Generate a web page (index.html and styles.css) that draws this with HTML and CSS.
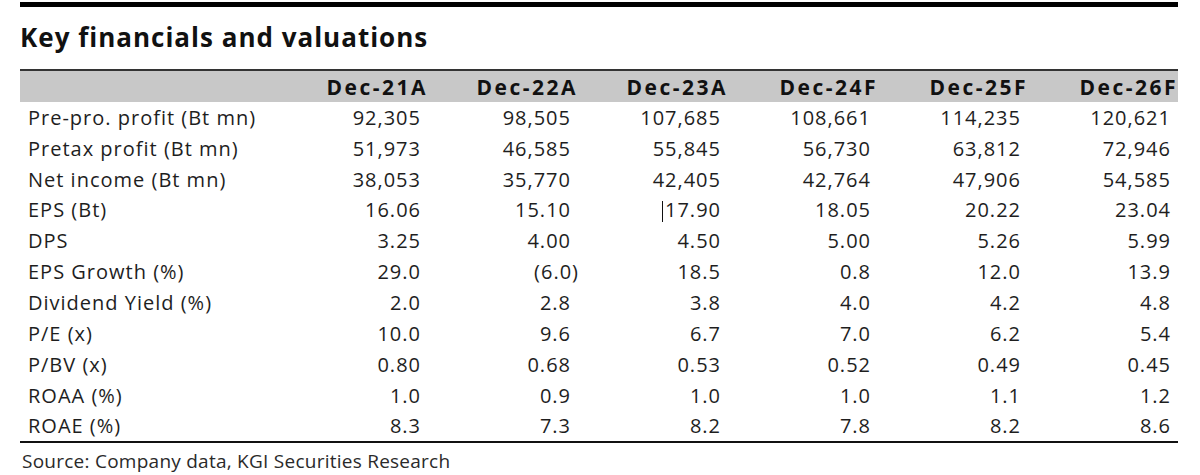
FILE: index.html
```html
<!DOCTYPE html>
<html lang="en">
<head>
<meta charset="utf-8">
<title>Key financials and valuations</title>
<link rel="stylesheet" href="styles.css">
</head>
<body>
<div class="page">
  <div class="topbar"></div>
  <h1 class="title">Key financials and valuations</h1>
  <div class="rule-top"></div>
  <div class="table">
    <div class="row head">
      <div class="label"></div>
      <div class="cell">Dec-21A</div>
      <div class="cell">Dec-22A</div>
      <div class="cell">Dec-23A</div>
      <div class="cell">Dec-24F</div>
      <div class="cell">Dec-25F</div>
      <div class="cell">Dec-26F</div>
    </div>
    <div class="row">
      <div class="label">Pre-pro. profit (Bt mn)</div>
      <div class="cell">92,305</div><div class="cell">98,505</div><div class="cell">107,685</div><div class="cell">108,661</div><div class="cell">114,235</div><div class="cell">120,621</div>
    </div>
    <div class="row">
      <div class="label">Pretax profit (Bt mn)</div>
      <div class="cell">51,973</div><div class="cell">46,585</div><div class="cell">55,845</div><div class="cell">56,730</div><div class="cell">63,812</div><div class="cell">72,946</div>
    </div>
    <div class="row">
      <div class="label">Net income (Bt mn)</div>
      <div class="cell">38,053</div><div class="cell">35,770</div><div class="cell">42,405</div><div class="cell">42,764</div><div class="cell">47,906</div><div class="cell">54,585</div>
    </div>
    <div class="row">
      <div class="label">EPS (Bt)</div>
      <div class="cell">16.06</div><div class="cell">15.10</div><div class="cell"><span class="caret"></span>17.90</div><div class="cell">18.05</div><div class="cell">20.22</div><div class="cell">23.04</div>
    </div>
    <div class="row">
      <div class="label">DPS</div>
      <div class="cell">3.25</div><div class="cell">4.00</div><div class="cell">4.50</div><div class="cell">5.00</div><div class="cell">5.26</div><div class="cell">5.99</div>
    </div>
    <div class="row">
      <div class="label">EPS Growth (%)</div>
      <div class="cell">29.0</div><div class="cell neg">(6.0)</div><div class="cell">18.5</div><div class="cell">0.8</div><div class="cell">12.0</div><div class="cell">13.9</div>
    </div>
    <div class="row">
      <div class="label">Dividend Yield (%)</div>
      <div class="cell">2.0</div><div class="cell">2.8</div><div class="cell">3.8</div><div class="cell">4.0</div><div class="cell">4.2</div><div class="cell">4.8</div>
    </div>
    <div class="row">
      <div class="label">P/E (x)</div>
      <div class="cell">10.0</div><div class="cell">9.6</div><div class="cell">6.7</div><div class="cell">7.0</div><div class="cell">6.2</div><div class="cell">5.4</div>
    </div>
    <div class="row">
      <div class="label">P/BV (x)</div>
      <div class="cell">0.80</div><div class="cell">0.68</div><div class="cell">0.53</div><div class="cell">0.52</div><div class="cell">0.49</div><div class="cell">0.45</div>
    </div>
    <div class="row">
      <div class="label">ROAA (%)</div>
      <div class="cell">1.0</div><div class="cell">0.9</div><div class="cell">1.0</div><div class="cell">1.0</div><div class="cell">1.1</div><div class="cell">1.2</div>
    </div>
    <div class="row">
      <div class="label">ROAE (%)</div>
      <div class="cell">8.3</div><div class="cell">7.3</div><div class="cell">8.2</div><div class="cell">7.8</div><div class="cell">8.2</div><div class="cell">8.6</div>
    </div>
  </div>
  <div class="rule-bottom"></div>
  <p class="source">Source: Company data, KGI Securities Research</p>
</div>
</body>
</html>
```

FILE: styles.css
```css
html, body {
  margin: 0;
  padding: 0;
  background: #ffffff;
}

.page {
  width: 1158px;
  margin-left: 20px;
  padding-top: 2px;
  font-family: "Open Sans", "Noto Sans", sans-serif;
  color: #1e1e1e;
}

.topbar {
  height: 5px;
  background: #000000;
}

.title {
  margin: 15px 0 17px 0;
  height: 30px;
  line-height: 30px;
  font-size: 26px;
  font-weight: 700;
  letter-spacing: 1px;
  color: #111111;
  white-space: nowrap;
}

.rule-top {
  height: 2px;
  background: #333333;
}

.table {
  overflow: hidden;
}

.row {
  display: grid;
  grid-template-columns: 258px repeat(6, 150px);
  height: 30.85px;
  align-items: center;
  font-size: 20px;
  letter-spacing: 1px;
  white-space: nowrap;
}

.row.head {
  height: 31px;
  background: #c8c8c8;
  font-size: 21px;
  font-weight: 700;
  letter-spacing: 2.5px;
  color: #111111;
}

.label {
  padding-left: 8px;
}

.cell {
  text-align: right;
  padding-right: 7px;
}

.row.head .cell {
  padding-right: 0;
}

.cell.neg {
  margin-right: -8px;
}

.caret {
  display: inline-block;
  width: 1px;
  height: 21px;
  background: #111111;
  vertical-align: -5px;
  margin-right: 2px;
}

.rule-bottom {
  height: 2px;
  background: #111111;
}

.source {
  margin: 6px 0 0 2px;
  font-size: 19px;
  line-height: 24px;
  letter-spacing: 0.25px;
  color: #2a2a2a;
  white-space: nowrap;
}
```
